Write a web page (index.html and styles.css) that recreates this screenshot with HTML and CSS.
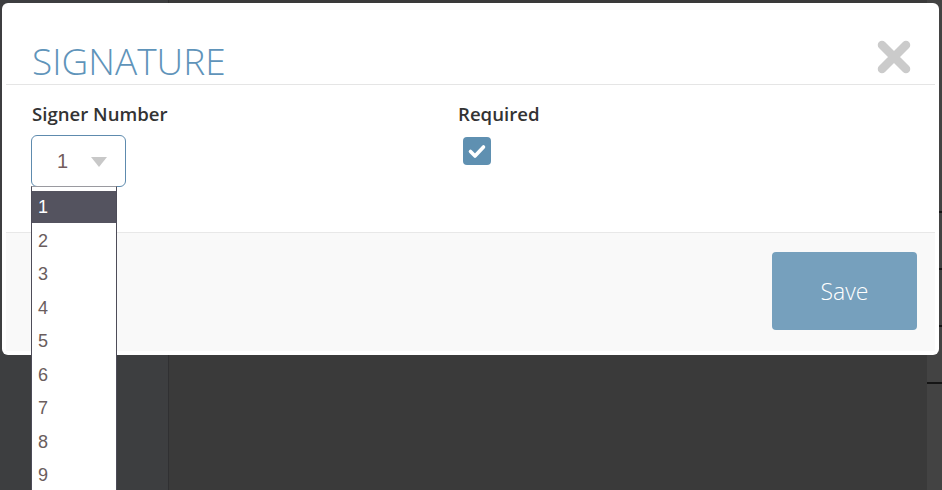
FILE: index.html
```html
<!DOCTYPE html>
<html>
<head>
<meta charset="utf-8">
<link rel="stylesheet" href="styles.css">
</head>
<body>
<div class="backdrop">
  <div class="side"></div>
  <div class="main"></div>
  <div class="rail">
    <div class="rail-line"></div>
    <div class="rail-line"></div>
    <div class="rail-line"></div>
    <div class="rail-line"></div>
  </div>
</div>

<div class="modal">
  <div class="modal-header">
    <h1 class="modal-title">SIGNATURE</h1>
    <svg class="close" width="34" height="34" viewBox="0 0 34 34">
      <path d="M5 5 L29 29 M29 5 L5 29" stroke="#cbcbcb" stroke-width="8.5" stroke-linecap="round" fill="none"/>
    </svg>
  </div>
  <div class="modal-body">
    <div class="field">
      <div class="label">Signer Number</div>
      <div class="select">
        <span class="select-value">1</span>
        <span class="caret"></span>
      </div>
    </div>
    <div class="field">
      <div class="label">Required</div>
      <div class="checkbox">
        <svg width="28" height="28" viewBox="0 0 28 28">
          <path d="M7.5 14.5 L12 19 L20.5 10" stroke="#fff" stroke-width="3.6" stroke-linecap="round" stroke-linejoin="round" fill="none"/>
        </svg>
      </div>
    </div>
  </div>
  <div class="modal-footer">
    <button class="save">Save</button>
  </div>
</div>

<ul class="options">
  <li class="option selected">1</li>
  <li class="option">2</li>
  <li class="option">3</li>
  <li class="option">4</li>
  <li class="option">5</li>
  <li class="option">6</li>
  <li class="option">7</li>
  <li class="option">8</li>
  <li class="option">9</li>
</ul>
</body>
</html>
```

FILE: styles.css
```css
html, body {
  margin: 0;
  padding: 0;
  width: 942px;
  height: 490px;
  overflow: hidden;
  background: #3a3a3a;
  font-family: "Open Sans", "Liberation Sans", sans-serif;
}

.backdrop {
  display: flex;
  height: 490px;
}

.side {
  width: 168px;
  background: #3d3e40;
  border-right: 1px solid #303032;
}

.main {
  flex: 1;
  background: #3a3a3a;
}

.rail {
  width: 15px;
  background: #434343;
  display: flex;
  flex-direction: column;
  padding-top: 211px;
  gap: 55px;
}

.rail-line {
  height: 2px;
  background: #151515;
}

.modal {
  position: absolute;
  left: 2px;
  top: 3px;
  width: 929px;
  height: 344px;
  padding: 4px;
  background: #fff;
  border-radius: 6px;
  display: flex;
  flex-direction: column;
}

.modal-header {
  height: 77px;
  border-bottom: 1px solid #e5e5e5;
  display: flex;
  align-items: flex-start;
  justify-content: space-between;
  padding: 0 24px 0 26px;
}

.modal-title {
  margin: 30px 0 0 0;
  font-family: "Open Sans", sans-serif;
  font-weight: 300;
  font-size: 37px;
  line-height: 48px;
  color: #5f94ba;
  letter-spacing: 0;
}

.close {
  margin-top: 33px;
}

.modal-body {
  height: 147px;
  display: grid;
  grid-template-columns: 426px 1fr;
  padding: 0 26px;
}

.label {
  margin-top: 15px;
  font-size: 18.6px;
  font-weight: 600;
  color: #333;
  line-height: 27px;
}

.select {
  margin-top: 8px;
  margin-left: -1px;
  width: 95px;
  height: 52px;
  border: 1px solid #5e8bae;
  border-radius: 6px;
  box-sizing: border-box;
  display: flex;
  align-items: center;
  padding-left: 25px;
}

.select-value {
  font-family: "Liberation Sans", Arial, sans-serif;
  font-size: 20px;
  color: #735c5c;
  width: 34px;
}

.caret {
  width: 0;
  height: 0;
  border-left: 8.5px solid transparent;
  border-right: 8.5px solid transparent;
  border-top: 10px solid #c8c8c8;
  margin-top: 1px;
}

.checkbox {
  margin-top: 10px;
  margin-left: 5px;
  width: 28px;
  height: 28px;
  border-radius: 4px;
  background: #5f90b1;
}

.modal-footer {
  flex: 1;
  background: #f9f9f9;
  border-top: 1px solid #e8e8e8;
  display: flex;
  justify-content: flex-end;
  align-items: flex-start;
  padding: 19px 18px 0 0;
}

.save {
  width: 145px;
  height: 78px;
  border: none;
  border-radius: 4px;
  background: #76a0bd;
  color: #fff;
  font-family: "Open Sans", sans-serif;
  font-size: 23px;
  font-weight: 300;
}

.options {
  position: absolute;
  left: 31px;
  top: 186px;
  width: 84px;
  margin: 0;
  padding: 5px 0 0 0;
  list-style: none;
  background: #fff;
  border: 1px solid #4d4c58;
  border-top-color: #9a9aa0;
  height: 320px;
}

.option {
  height: 33.5px;
  line-height: 33px;
  padding-left: 6px;
  font-family: "Liberation Sans", Arial, sans-serif;
  font-size: 18px;
  color: #6a5d5d;
}

.option.selected {
  margin-top: -1px;
  background: #54535f;
  color: #fff;
  height: 32px;
  line-height: 32px;
  margin-bottom: 1.5px;
}
```
